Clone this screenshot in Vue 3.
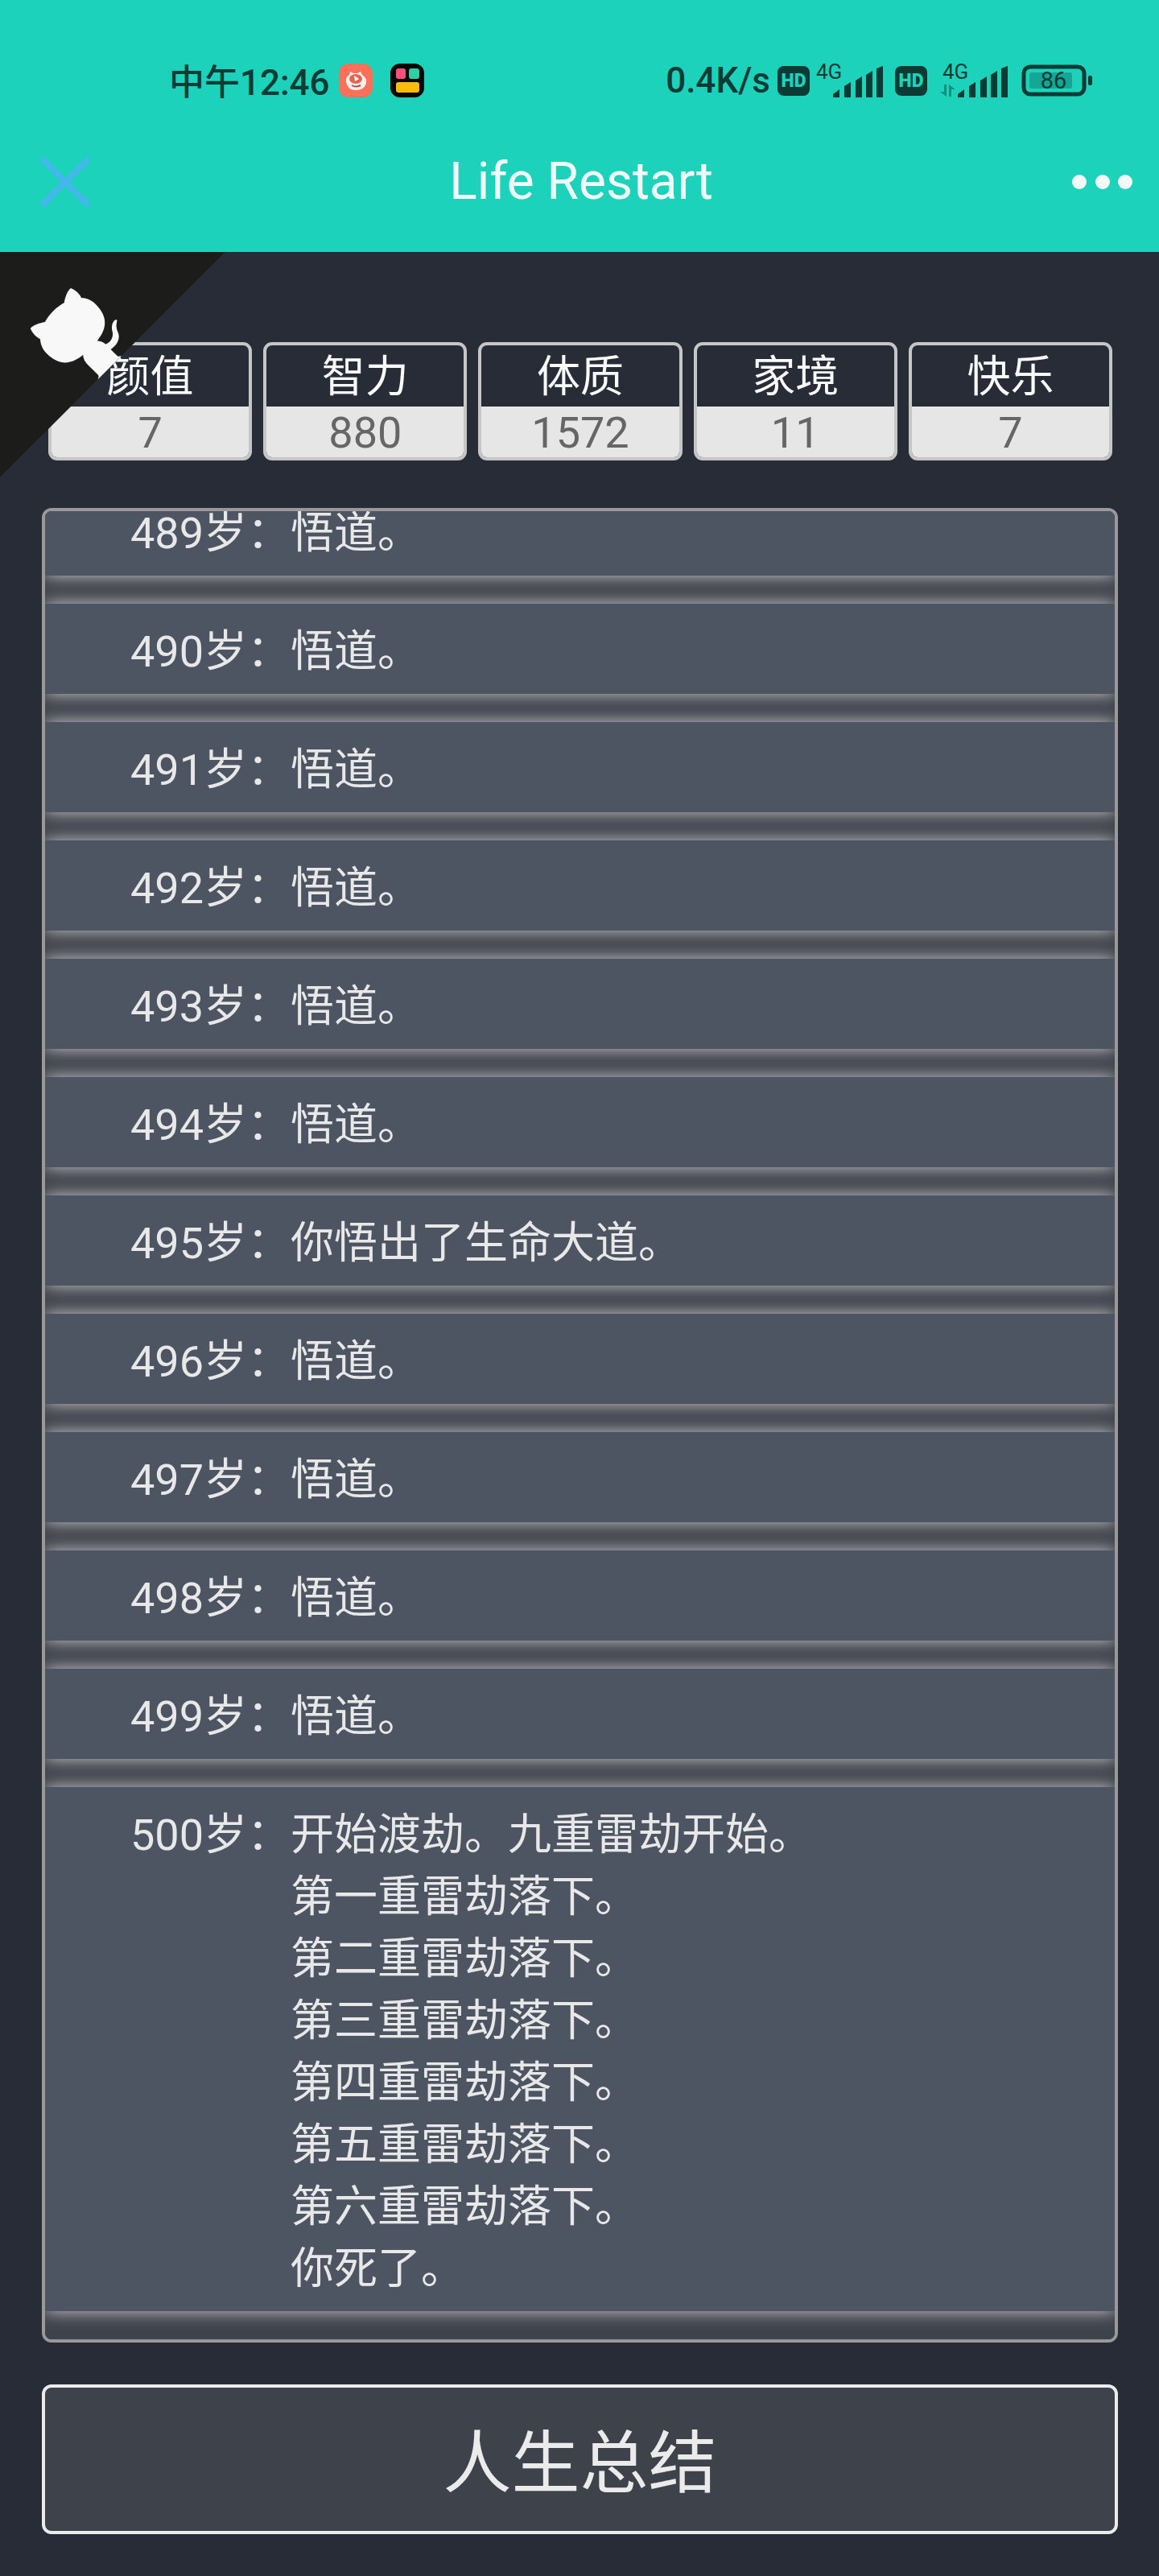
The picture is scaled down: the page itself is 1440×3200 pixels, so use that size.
<script setup>
import { ref, onMounted } from 'vue'

const stats = ref([
  { name: '颜值', value: 7 },
  { name: '智力', value: 880 },
  { name: '体质', value: 1572 },
  { name: '家境', value: 11 },
  { name: '快乐', value: 7 }
])

const logs = ref([
  { age: 489, events: ['悟道。'] },
  { age: 490, events: ['悟道。'] },
  { age: 491, events: ['悟道。'] },
  { age: 492, events: ['悟道。'] },
  { age: 493, events: ['悟道。'] },
  { age: 494, events: ['悟道。'] },
  { age: 495, events: ['你悟出了生命大道。'] },
  { age: 496, events: ['悟道。'] },
  { age: 497, events: ['悟道。'] },
  { age: 498, events: ['悟道。'] },
  { age: 499, events: ['悟道。'] },
  {
    age: 500,
    events: [
      '开始渡劫。九重雷劫开始。',
      '第一重雷劫落下。',
      '第二重雷劫落下。',
      '第三重雷劫落下。',
      '第四重雷劫落下。',
      '第五重雷劫落下。',
      '第六重雷劫落下。',
      '你死了。'
    ]
  }
])

const logBox = ref(null)

// 滚动到最新一岁
onMounted(() => {
  logBox.value.scrollTop = logBox.value.scrollHeight
})
</script>

<template>
  <div class="page">
    <header class="top">
      <div class="status-bar">
        <div class="status-left">
          <span class="clock">中午12:46</span>
          <svg class="app-icon" viewBox="0 0 42 42">
            <rect width="42" height="42" rx="12" fill="#fb7057" />
            <path d="M9 23 Q8 17 13 14 L14 10 L18 12 H23 L27 10 L29 14 Q35 18 34 24 Q32 33 21 33 Q11 33 9 23 Z" fill="#fbeeee" />
            <ellipse cx="21" cy="19" rx="8" ry="6" fill="#e2664f" />
            <path d="M19 15 L25 19 L20 22 Z" fill="#fff" />
            <path d="M16 27 Q21 30 27 27" stroke="#b8503e" stroke-width="2" fill="none" />
          </svg>
          <svg class="app-icon" viewBox="0 0 42 42">
            <rect width="42" height="42" rx="12" fill="#050505" />
            <rect x="7" y="6" width="12" height="13" rx="3" fill="#fb4f7c" />
            <rect x="23" y="6" width="13" height="13" rx="3" fill="#2fcfa4" />
            <rect x="7" y="23" width="29" height="13" rx="3" fill="#fbbb0c" />
          </svg>
        </div>
        <div class="status-right">
          <span class="speed">0.4K/s</span>
          <span class="hd">HD</span>
          <svg class="signal" viewBox="0 0 84 44">
            <text x="1" y="20">4G</text>
            <path d="M22 43 v-4 l8 -6 v10 z M36 43 v-14 l8 -5 v19 z M50 43 v-21 l8 -5 v26 z M63 43 v-28 l8 -5 v33 z M76 43 v-36 l8 -3 v39 z" />
          </svg>
          <span class="hd">HD</span>
          <svg class="signal" viewBox="0 0 84 44">
            <text x="3" y="20">4G</text>
            <path class="data" d="M5 27 h3 v15 l-8 -6 h5 z M11 42 V27 l8 6 h-5 v9 z" />
            <path d="M22 43 v-4 l8 -6 v10 z M36 43 v-14 l8 -5 v19 z M50 43 v-21 l8 -5 v26 z M63 43 v-28 l8 -5 v33 z M76 43 v-36 l8 -3 v39 z" />
          </svg>
          <svg class="battery" viewBox="0 0 88 38">
            <rect x="9" y="9" width="53" height="20" rx="3" fill="#14a795" />
            <rect x="2" y="2" width="75" height="34" rx="8" fill="none" stroke="#0c3b36" stroke-width="5" />
            <rect x="82" y="13" width="5" height="12" rx="2" />
            <text x="39" y="29" text-anchor="middle">86</text>
          </svg>
        </div>
      </div>
      <nav class="nav-bar">
        <button type="button" class="nav-btn" aria-label="关闭">
          <svg class="close" viewBox="0 0 62 62">
            <path d="M4 4 L58 58 M58 4 L4 58" stroke="#46b6ee" stroke-width="7" stroke-linecap="round" />
          </svg>
        </button>
        <h1>Life Restart</h1>
        <button type="button" class="nav-btn" aria-label="更多">
          <svg class="more" viewBox="0 0 76 20">
            <circle cx="9" cy="10" r="9" />
            <circle cx="38" cy="10" r="9" />
            <circle cx="66" cy="10" r="9" />
          </svg>
        </button>
      </nav>
    </header>

    <main class="game">
      <a href="#" class="github-corner" aria-label="GitHub">
        <svg viewBox="0 0 250 250">
          <g transform="translate(250 0) scale(-1 1)">
            <path d="M0 0 L250 250 V0 Z" fill="#1c1c1a" />
            <path d="M128.3,109.0 C113.8,99.7 119.0,89.6 119.0,89.6 C122.0,82.7 120.5,78.6 120.5,78.6 C119.2,72.0 123.4,76.3 123.4,76.3 C127.3,80.9 125.5,87.3 125.5,87.3 C122.9,97.6 130.6,101.9 134.4,103.2" />
            <path d="M115.0,115.0 C114.9,115.1 118.7,116.5 119.8,115.4 L133.7,101.6 C136.9,99.2 139.9,98.4 142.2,98.6 C133.8,88.0 127.5,74.4 143.8,58.0 C148.5,53.4 154.0,51.2 159.7,51.0 C160.3,49.4 163.2,43.6 171.4,40.1 C171.4,40.1 176.1,42.5 178.8,56.2 C183.1,58.6 187.2,61.8 190.9,65.4 C194.5,69.0 197.7,73.2 200.1,77.6 C213.8,80.2 216.3,84.9 216.3,84.9 C212.7,93.1 206.9,96.0 205.4,96.6 C205.1,102.4 203.0,107.8 198.3,112.5 C181.9,128.9 168.3,122.5 157.7,114.1 C157.9,116.9 156.7,120.9 152.7,124.9 L141.0,136.5 C139.8,137.7 141.6,141.9 141.8,141.8 Z" />
          </g>
        </svg>
      </a>

      <ul class="stats">
        <li v-for="stat in stats" :key="stat.name">
          <span class="stat-name">{{ stat.name }}</span>
          <span class="stat-value">{{ stat.value }}</span>
        </li>
      </ul>

      <ul ref="logBox" class="logs">
        <li v-for="log in logs" :key="log.age">
          <span class="age">{{ log.age }}岁：</span>
          <div class="events">
            <p v-for="event in log.events" :key="event">{{ event }}</p>
          </div>
        </li>
      </ul>

      <button type="button" class="summary-btn">人生总结</button>
    </main>
  </div>
</template>

<style>
body {
  margin: 0;
  background: #282c36;
}
</style>

<style scoped>
.page {
  display: flex;
  flex-direction: column;
  height: 100vh;
  background: #282c36;
  font-family: Roboto, "Noto Sans CJK SC", sans-serif;
}

ul, p, h1 {
  list-style: none;
  margin: 0;
  padding: 0;
}

svg {
  display: block;
  overflow: visible;
}

/* Header */
.top {
  flex: none;
  background: #1dd2bb;
  padding-top: 60px;
}

.status-bar {
  display: flex;
  justify-content: space-between;
  align-items: center;
  height: 80px;
  padding: 0 82px 0 210px;
  color: #0c3b36;
  font-size: 44px;
  font-weight: 500;
}

.status-left {
  display: flex;
  align-items: center;
}

.status-right {
  display: flex;
  align-items: center;
}

.clock {
  padding-bottom: 2px;
}

.app-icon {
  width: 42px;
  height: 42px;
  margin-left: 11px;
}

.app-icon + .app-icon {
  margin-left: 22px;
}

.hd {
  width: 40px;
  height: 37px;
  margin-left: 9px;
  border-radius: 8px;
  background: #0c3b36;
  color: #1dd2bb;
  font-size: 23px;
  font-weight: 900;
  line-height: 37px;
  text-align: center;
}

.signal {
  width: 84px;
  height: 44px;
  margin-left: 7px;
  fill: #0c3b36;
}

.signal text {
  font-size: 26px;
  font-weight: 400;
}

.signal + .hd {
  margin-left: 15px;
}

.hd + .signal:nth-last-child(2) {
  margin-left: 16px;
}

.signal .data {
  fill: #12907f;
}

.battery {
  width: 88px;
  height: 38px;
  margin-left: 18px;
  fill: #0c3b36;
}

.battery text {
  font-size: 29px;
  font-weight: 400;
}

.nav-bar {
  display: flex;
  justify-content: space-between;
  align-items: center;
  height: 171px;
  padding: 0 32px 2px 50px;
}

.nav-btn {
  display: flex;
  padding: 0;
  border: none;
  background: transparent;
  cursor: pointer;
}

.close {
  width: 62px;
  height: 62px;
}

.more {
  width: 76px;
  height: 20px;
  fill: #f4f8f7;
}

h1 {
  color: #f4f8f7;
  font-size: 64px;
  font-weight: 400;
}

/* Game */
.game {
  position: relative;
  display: flex;
  flex-direction: column;
  flex: 1;
  min-height: 0;
  padding: 112px 51px 52px 52px;
}

.github-corner {
  position: absolute;
  top: 0;
  left: 0;
}

.github-corner svg {
  width: 280px;
  height: 280px;
  fill: #f8f8f8;
}

.stats {
  display: flex;
  gap: 14px;
  padding: 0 7px 0 8px;
}

.stats li {
  flex: 1;
  display: flex;
  flex-direction: column;
  border: 4px solid #c6c6c6;
  border-radius: 11px;
  overflow: hidden;
  text-align: center;
  font-size: 54px;
}

.stat-name {
  padding-top: 4px;
  color: #fafafa;
  line-height: 72px;
}

.stat-value {
  padding-top: 2px;
  background: #e6e6e6;
  color: #666;
  line-height: 61px;
}

.logs {
  flex: 1;
  min-height: 0;
  display: flex;
  flex-direction: column;
  gap: 35px;
  margin: 59px 0 52px;
  padding-bottom: 35px;
  border: 4px solid #999;
  border-radius: 12px;
  background: #3e424a;
  overflow-y: auto;
  scrollbar-width: none;
}

.logs li {
  flex: none;
  display: flex;
  padding: 21px 106px 14px;
  background: #4d5562;
  box-shadow: 0 0 20px #cfcfcf;
  color: #e8e8e8;
  font-size: 54px;
  line-height: 77px;
}

.age {
  flex: none;
}

.summary-btn {
  flex: none;
  height: 186px;
  padding-bottom: 6px;
  border: 4px solid #ebebeb;
  border-radius: 12px;
  background: #3e424a;
  color: #ebebeb;
  font-family: inherit;
  font-size: 85px;
  cursor: pointer;
}
</style>
